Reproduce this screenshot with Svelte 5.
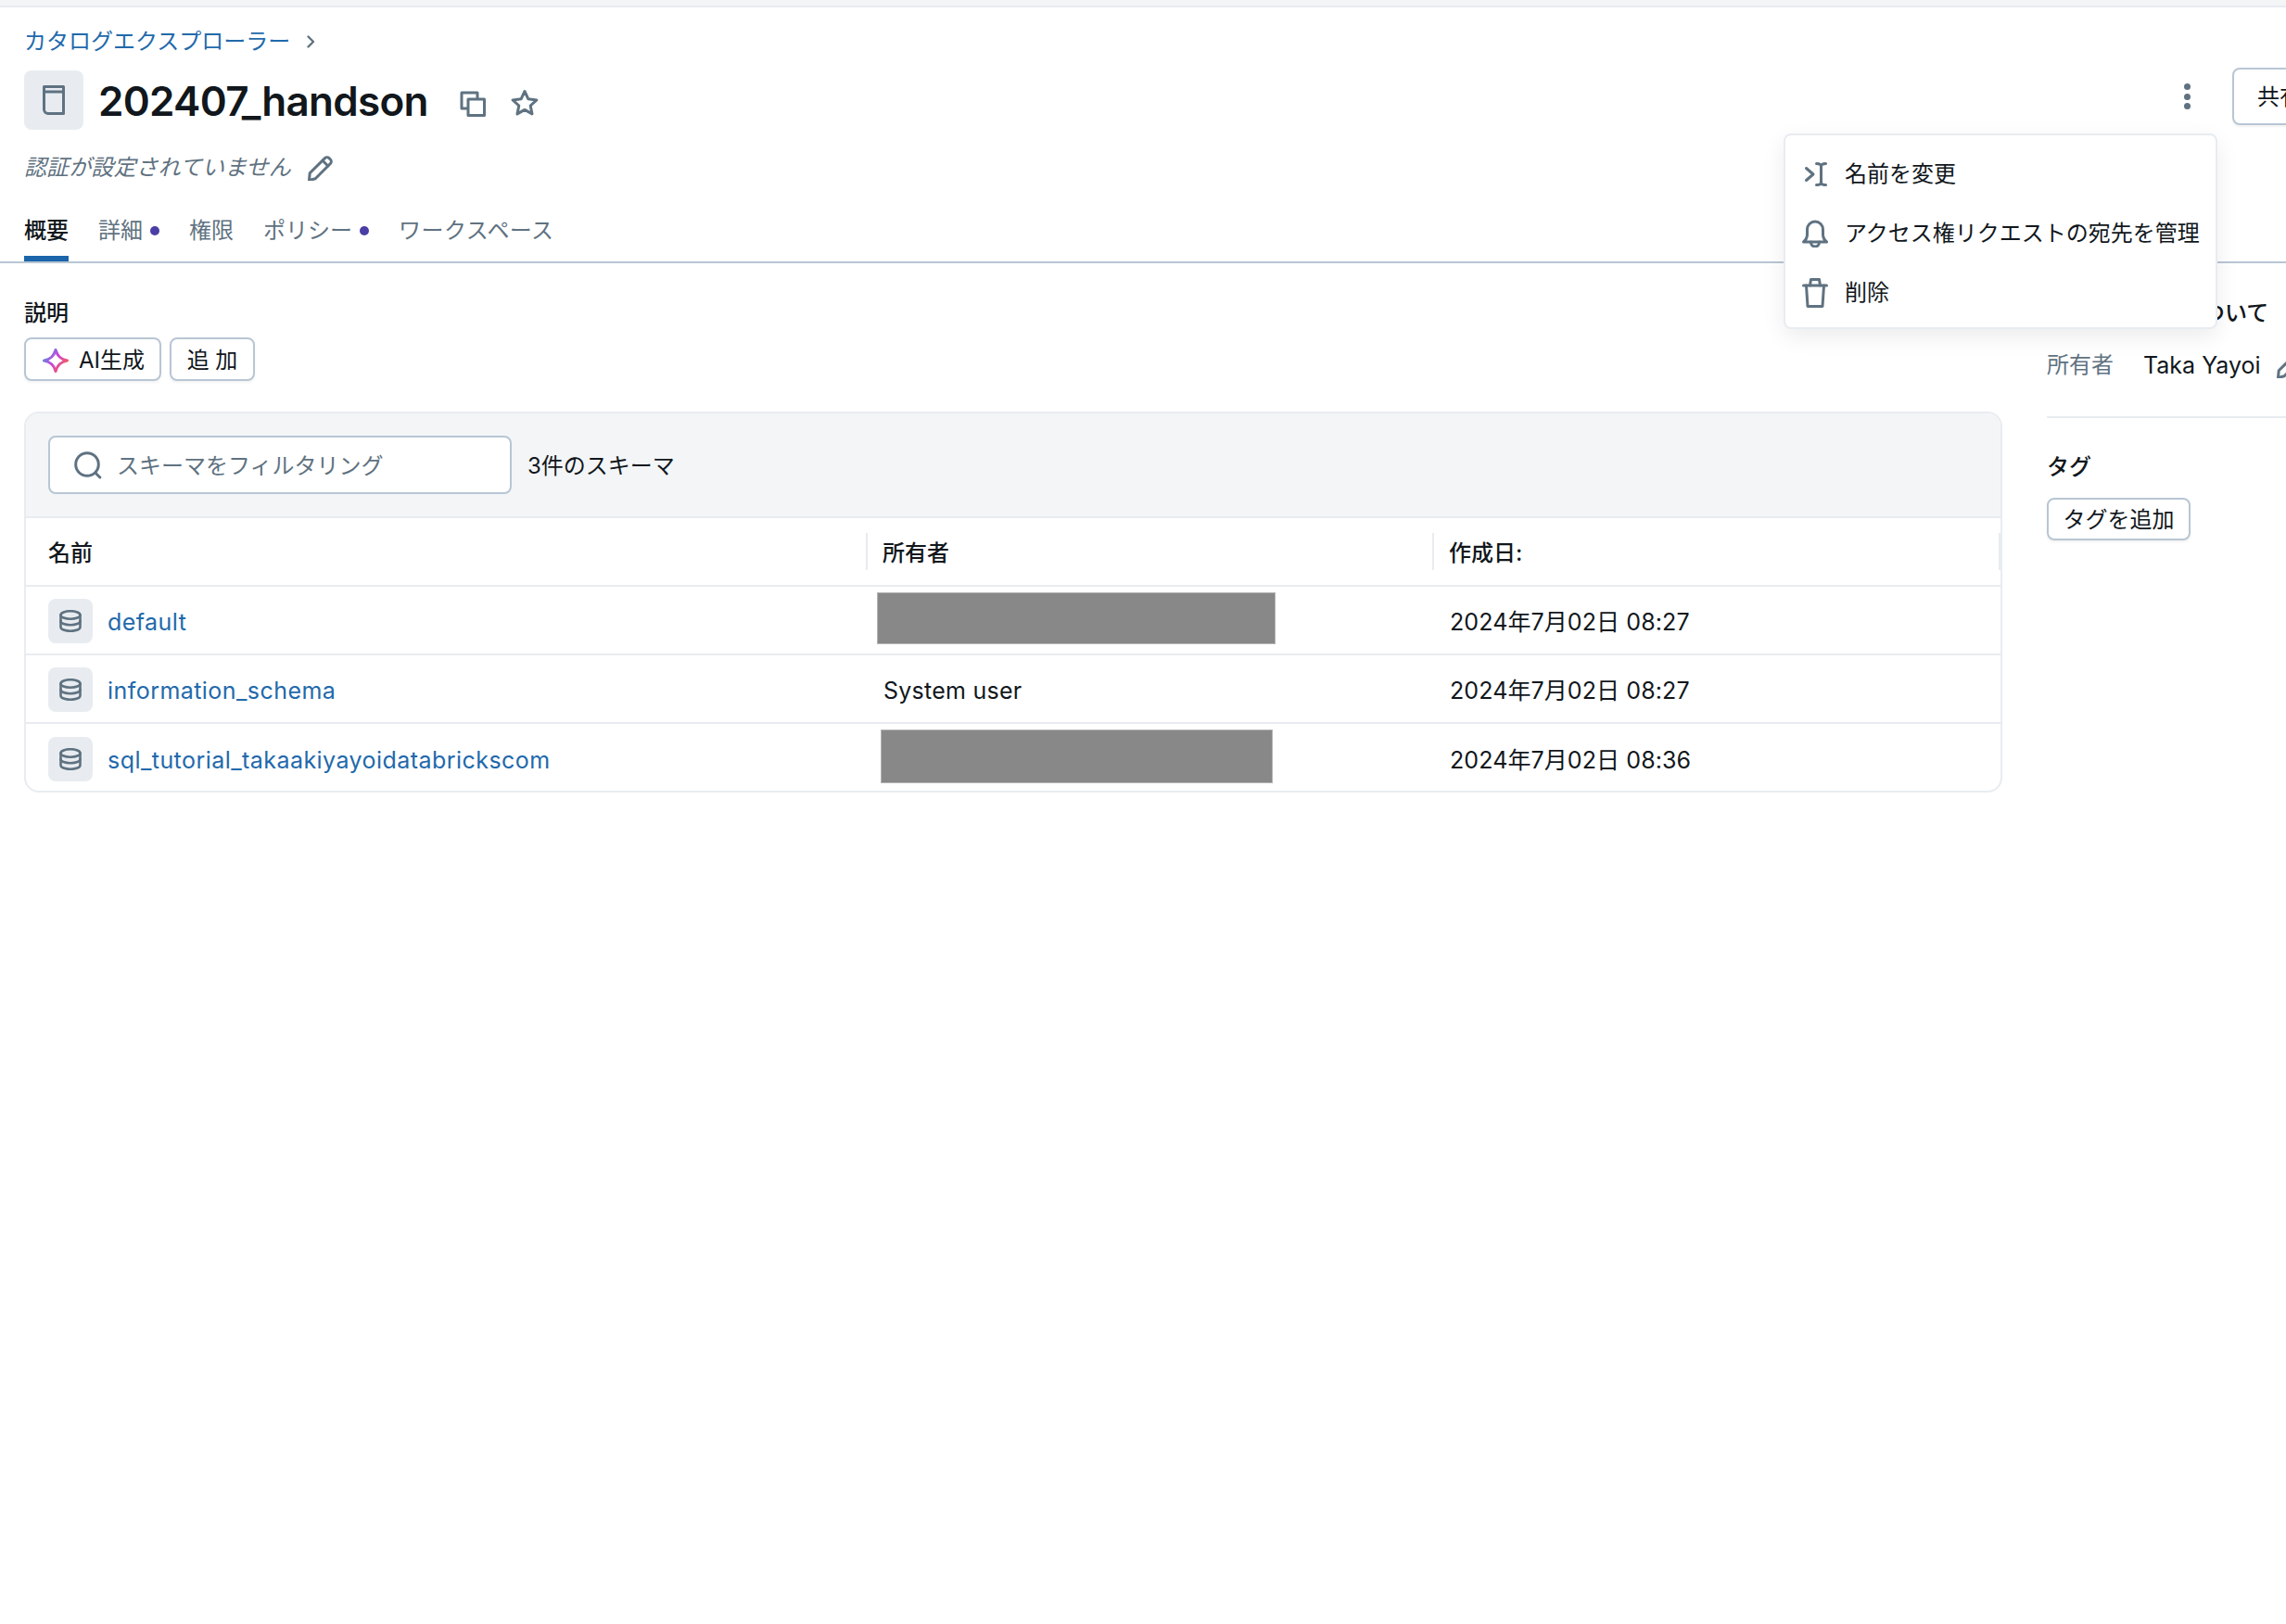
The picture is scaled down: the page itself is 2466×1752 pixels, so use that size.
<script lang="ts">
	const tabs = [
		{ label: '概要', active: true },
		{ label: '詳細', dot: true },
		{ label: '権限' },
		{ label: 'ポリシー', dot: true },
		{ label: 'ワークスペース' }
	];

	const schemas = [
		{ name: 'default', owner: '', mask: 'maskWide', created: '2024年7月02日 08:27' },
		{ name: 'information_schema', owner: 'System user', mask: '', created: '2024年7月02日 08:27' },
		{ name: 'sql_tutorial_takaakiyayoidatabrickscom', owner: '', mask: 'maskNarrow', created: '2024年7月02日 08:36' }
	];
</script>

{#snippet pencil(cls)}
	<svg class={cls} viewBox="0 0 27 27" aria-hidden="true">
		<path d="M2.200 18.800L18.500 2.600a3.200 3.200 0 0 1 4.500 0l1.400 1.400a3.200 3.200 0 0 1 0 4.500L8.200 24.800l-6.700 1.700z" />
		<path d="M16 5.200l5.800 5.800" />
	</svg>
{/snippet}

<div class="page">
	<div class="topBar"></div>

	<nav class="breadcrumb">
		<a href="#top">カタログエクスプローラー</a>
		<svg viewBox="0 0 12 16" aria-hidden="true"><path d="M3.500 2.500L9 8L3.500 13.500" /></svg>
	</nav>

	<header class="titleRow">
		<span class="titleIcon">
			<svg viewBox="0 0 24 32" aria-hidden="true">
				<path d="M1.500 1.500h21v29H6a4.500 4.500 0 0 1-4.500-4.500z" />
				<path d="M1.500 7h21" />
			</svg>
		</span>
		<h1>202407_handson</h1>
		<svg class="copyIcon" viewBox="0 0 28 28" aria-hidden="true">
			<path d="M8 19H2V2h17v6" />
			<rect x="9" y="9" width="17.500" height="17.500" />
		</svg>
		<svg class="starIcon" viewBox="0 0 30 29" aria-hidden="true">
			<path d="M15 2.500l3.900 8.300 9 1.100-6.700 6.100 1.800 8.900-8-4.500-8 4.500 1.800-8.900-6.700-6.100 9-1.100z" />
		</svg>
		<div class="titleActions">
			<span class="kebab"><i></i><i></i><i></i></span>
			<button class="btn shareBtn">共有</button>
		</div>
	</header>

	<div class="commentRow">
		<em>認証が設定されていません</em>
		{@render pencil('commentPencil')}
	</div>

	<div class="tabs">
		{#each tabs as tab}
			<div class="tab" class:active={tab.active}>
				<span>{tab.label}</span>
				{#if tab.dot}<i class="tabDot"></i>{/if}
			</div>
		{/each}
	</div>

	<div class="content">
		<main class="mainCol">
			<div class="sectionTitle">説明</div>
			<div class="btnRow">
				<button class="btn aiBtn">
					<svg viewBox="0 0 28 26" aria-hidden="true">
						<defs>
							<linearGradient id="aiGrad" x1="0" y1="0.15" x2="1" y2="0.8">
								<stop offset="0" stop-color="#4299e0" />
								<stop offset="0.45" stop-color="#ca42e0" />
								<stop offset="1" stop-color="#ff5f46" />
							</linearGradient>
						</defs>
						<path d="M14 1.500C16 8.500 19.500 11.500 26.500 13 19.500 14.500 16 17.500 14 24.500 12 17.500 8.500 14.500 1.500 13 8.500 11.500 12 8.500 14 1.500z" stroke="url(#aiGrad)" />
					</svg>
					<span>AI生成</span>
				</button>
				<button class="btn addBtn">追 加</button>
			</div>

			<section class="card">
				<div class="filterBar">
					<div class="searchBox">
						<svg viewBox="0 0 30 30" aria-hidden="true">
							<circle cx="14" cy="14" r="12.300" />
							<path d="M22.800 23l5 5" />
						</svg>
						<span>スキーマをフィルタリング</span>
					</div>
					<span class="count">3件のスキーマ</span>
				</div>

				<div class="row headRow">
					<div class="headCell">名前</div>
					<div class="headCell">所有者</div>
					<div class="headCell">作成日:</div>
				</div>

				{#each schemas as schema}
					<div class="row bodyRow">
						<div class="nameCell">
							<span class="dbIcon">
								<svg viewBox="0 0 24 24" aria-hidden="true">
									<ellipse cx="12" cy="5.500" rx="10.500" ry="4.300" />
									<path d="M1.500 5.500v13c0 2.400 4.700 4.300 10.500 4.300s10.500-1.900 10.500-4.300v-13" />
									<path d="M1.500 12c0 2.400 4.700 4.300 10.500 4.300s10.500-1.900 10.500-4.300" />
								</svg>
							</span>
							<a href="#top">{schema.name}</a>
						</div>
						<div class="ownerCell">
							<span>{schema.owner}</span>
							{#if schema.mask}<span class="mask {schema.mask}"></span>{/if}
						</div>
						<div class="dateCell"><span>{schema.created}</span></div>
					</div>
				{/each}
			</section>
		</main>

		<aside class="sideCol">
			<div class="sectionTitle">このカタログについて</div>
			<div class="ownerRow">
				<span class="ownerLabel">所有者</span>
				<span class="ownerName">Taka Yayoi</span>
				{@render pencil('ownerPencil')}
			</div>
			<div class="sideDivider"></div>
			<div class="sectionTitle">タグ</div>
			<button class="btn tagBtn">タグを追加</button>
		</aside>
	</div>

	<div class="menu">
		<div class="menuItem">
			<svg viewBox="0 0 28 30" aria-hidden="true">
				<path d="M4.500 8.500l7.500 6.500-7.500 6.500" />
				<path d="M15.500 3.500c3 0 5 .8 5 3v17c0 2.200-2 3-5 3M25.500 3.500c-3 0-5 .8-5 3v17c0 2.200 2 3 5 3" />
			</svg>
			<span>名前を変更</span>
		</div>
		<div class="menuItem">
			<svg viewBox="0 0 28 30" aria-hidden="true">
				<path d="M1.500 24c2.900-2.100 4-4.700 4-8.300v-5.200a8.500 8.500 0 0 1 17 0v5.200c0 3.600 1.100 6.200 4 8.300z" />
				<path d="M9.500 24c0 3.200 2 5 4.500 5s4.500-1.800 4.500-5" />
			</svg>
			<span>アクセス権リクエストの宛先を管理</span>
		</div>
		<div class="menuItem">
			<svg class="trashIcon" viewBox="0 0 28 32" aria-hidden="true">
				<path d="M1.500 8h25" />
				<path d="M8.500 8l1-6.500h9l1 6.500" />
				<path d="M4.500 8l1.500 22.500h16L23.500 8" />
			</svg>
			<span>削除</span>
		</div>
	</div>
</div>

<style>
	:global(body) {
		margin: 0;
		background: #fff;
	}

	.page {
		position: relative;
		width: 2466px;
		height: 1752px;
		overflow: hidden;
		font-family: Inter, 'Noto Sans CJK JP', sans-serif;
		font-size: 24px;
		line-height: 36px;
		color: #11171c;
	}

	svg {
		display: block;
		flex: none;
		fill: none;
		stroke: #5f7281;
		stroke-width: 3;
		stroke-linejoin: round;
		stroke-linecap: round;
	}

	a {
		color: #2269ab;
		text-decoration: none;
	}

	.topBar {
		height: 6px;
		background: #f3f5f7;
		border-bottom: 2px solid #e8ecf0;
	}

	.breadcrumb {
		display: flex;
		align-items: center;
		gap: 16px;
		height: 36px;
		margin: 19px 0 0 26px;
	}

	.breadcrumb svg {
		width: 12px;
		height: 16px;
		stroke-width: 2.400;
	}

	.titleRow {
		display: flex;
		align-items: center;
		height: 64px;
		margin: 13px 0 0 26px;
	}

	.titleIcon {
		display: grid;
		place-items: center;
		width: 64px;
		height: 64px;
		border-radius: 8px;
		background: #e8ecf0;
	}

	.titleIcon svg {
		width: 24px;
		height: 32px;
	}

	h1 {
		margin: 2px 0 0 16px;
		font-size: 44px;
		font-weight: 600;
		line-height: 64px;
		letter-spacing: -0.7px;
	}

	.copyIcon {
		width: 28px;
		height: 28px;
		margin: 8px 0 0 34px;
	}

	.starIcon {
		width: 30px;
		height: 29px;
		margin: 5px 0 0 27px;
	}

	.titleActions {
		display: flex;
		align-items: center;
		flex: none;
		gap: 44px;
		width: 160px;
		margin: -8px -50px 0 auto;
	}

	.kebab {
		display: grid;
		gap: 3.500px;
		flex: none;
		width: 8px;
	}

	.kebab i {
		display: block;
		width: 7px;
		height: 7px;
		border-radius: 50%;
		background: #5f7281;
	}

	.btn {
		display: inline-flex;
		align-items: center;
		justify-content: center;
		box-sizing: border-box;
		flex: none;
		padding: 2px 0 0;
		border: 2px solid #b8c6d4;
		border-radius: 8px;
		background: #fff;
		box-shadow: 0 2px 3px rgba(0, 0, 0, 0.05);
		font: inherit;
		color: inherit;
	}

	.shareBtn {
		justify-content: flex-start;
		width: 108px;
		height: 62px;
		padding-left: 25px;
	}

	.commentRow {
		display: flex;
		align-items: center;
		gap: 18px;
		height: 36px;
		margin: 23px 0 0 26px;
		color: #5f7281;
	}

	.commentRow em {
		letter-spacing: 0.1px;
	}

	.commentPencil {
		width: 27px;
		height: 27px;
	}

	.tabs {
		display: flex;
		gap: 32px;
		height: 66px;
		margin: 17px 0 0;
		padding-left: 26px;
		border-bottom: 2px solid #b8c6d4;
	}

	.tab {
		display: flex;
		align-items: center;
		gap: 8px;
		box-sizing: border-box;
		height: 66px;
		border-top: 6px solid transparent;
		border-bottom: 6px solid transparent;
		color: #5f7281;
	}

	.tab:last-child {
		letter-spacing: 0.45px;
	}

	.tab.active {
		border-bottom-color: #1b65aa;
		color: #11171c;
		font-weight: 500;
	}

	.tabDot {
		width: 10px;
		height: 10px;
		border-radius: 50%;
		background: #4a3ea6;
	}

	.content {
		display: flex;
		gap: 48px;
		padding: 35px 0 0 26px;
	}

	.mainCol {
		flex: none;
		width: 2134px;
	}

	.sideCol {
		flex: 1;
		min-width: 0;
	}

	.sectionTitle {
		box-sizing: border-box;
		height: 36px;
		padding-top: 0.500px;
		font-weight: 500;
		white-space: nowrap;
	}

	.btnRow {
		display: flex;
		gap: 9px;
		margin-top: 9px;
	}

	.aiBtn {
		gap: 11px;
		justify-content: flex-start;
		width: 148px;
		height: 47px;
		padding-left: 18px;
	}

	.aiBtn svg {
		width: 28px;
		height: 26px;
	}

	.addBtn {
		width: 92px;
		height: 47px;
	}

	.card {
		box-sizing: border-box;
		height: 411px;
		margin-top: 33px;
		overflow: hidden;
		border: 2px solid #e8ecf0;
		border-radius: 16px;
	}

	.filterBar {
		display: flex;
		align-items: center;
		gap: 17px;
		box-sizing: border-box;
		height: 113px;
		padding: 0 0 0 24px;
		background: #f3f5f7;
		border-bottom: 2px solid #e8ecf0;
	}

	.searchBox {
		display: flex;
		align-items: center;
		gap: 16px;
		box-sizing: border-box;
		width: 500px;
		height: 63px;
		padding-left: 26px;
		border: 2px solid #b8c6d4;
		border-radius: 8px;
		background: #fff;
		color: #5f7281;
	}

	.searchBox svg {
		width: 30px;
		height: 30px;
	}

	.searchBox span,
	.count {
		padding-top: 2px;
	}

	.row {
		display: grid;
		grid-template-columns: 908px 611px 1fr;
		box-sizing: border-box;
		height: 74px;
		border-bottom: 2px solid #e8ecf0;
	}

	.row:last-child {
		border-bottom: 0;
	}

	.headRow {
		align-items: center;
		font-weight: 500;
	}

	.headCell {
		display: flex;
		align-items: center;
		height: 40px;
		padding: 3px 0 0 16px;
		box-sizing: border-box;
		border-right: 2px solid #e8ecf0;
	}

	.headCell:first-child {
		padding-left: 24px;
	}

	.bodyRow > div {
		display: flex;
		align-items: center;
		position: relative;
		padding-left: 17px;
		font-size: 25px;
	}

	.bodyRow > .nameCell {
		gap: 16px;
		padding-left: 24px;
	}

	.nameCell a {
		padding-top: 3px;
		letter-spacing: 0.45px;
	}

	.ownerCell > span:first-child {
		padding-top: 3px;
		letter-spacing: 0.25px;
	}

	.dateCell span {
		padding-top: 3px;
		letter-spacing: 0.1px;
	}

	.dbIcon {
		display: grid;
		place-items: center;
		width: 48px;
		height: 48px;
		margin-top: 1px;
		border-radius: 8px;
		background: #e8ecf0;
	}

	.dbIcon svg {
		width: 24px;
		height: 24px;
		stroke-width: 2.600;
	}

	.bodyRow > .ownerCell .mask {
		position: absolute;
		background: #888;
		outline: 1px solid #b5b5b5;
	}

	.maskWide {
		left: 11px;
		top: 7px;
		width: 428px;
		height: 54px;
	}

	.maskNarrow {
		left: 15px;
		top: 7px;
		width: 421px;
		height: 56px;
	}

	.ownerRow {
		display: flex;
		align-items: center;
		gap: 32px;
		margin-top: 21px;
		white-space: nowrap;
	}

	.ownerLabel {
		color: #5f7281;
	}

	.ownerName {
		font-size: 25px;
	}

	.ownerPencil {
		width: 27px;
		height: 27px;
		margin-left: -15px;
	}

	.sideDivider {
		height: 2px;
		margin: 37px 0 34px;
		background: #e8ecf0;
	}

	.tagBtn {
		width: 155px;
		height: 46px;
		margin-top: 16px;
	}

	.menu {
		position: absolute;
		left: 1924px;
		top: 144px;
		box-sizing: border-box;
		width: 468px;
		height: 211px;
		padding: 9.500px 0;
		border: 2px solid #e8ecf0;
		border-radius: 8px;
		background: #fff;
		box-shadow: 0 8px 24px rgba(0, 0, 0, 0.08);
	}

	.menuItem {
		display: flex;
		align-items: center;
		gap: 18px;
		height: 64px;
		padding-left: 18px;
		white-space: nowrap;
	}

	.menuItem svg {
		width: 28px;
		height: 30px;
	}

	.menuItem .trashIcon {
		height: 32px;
	}
</style>
